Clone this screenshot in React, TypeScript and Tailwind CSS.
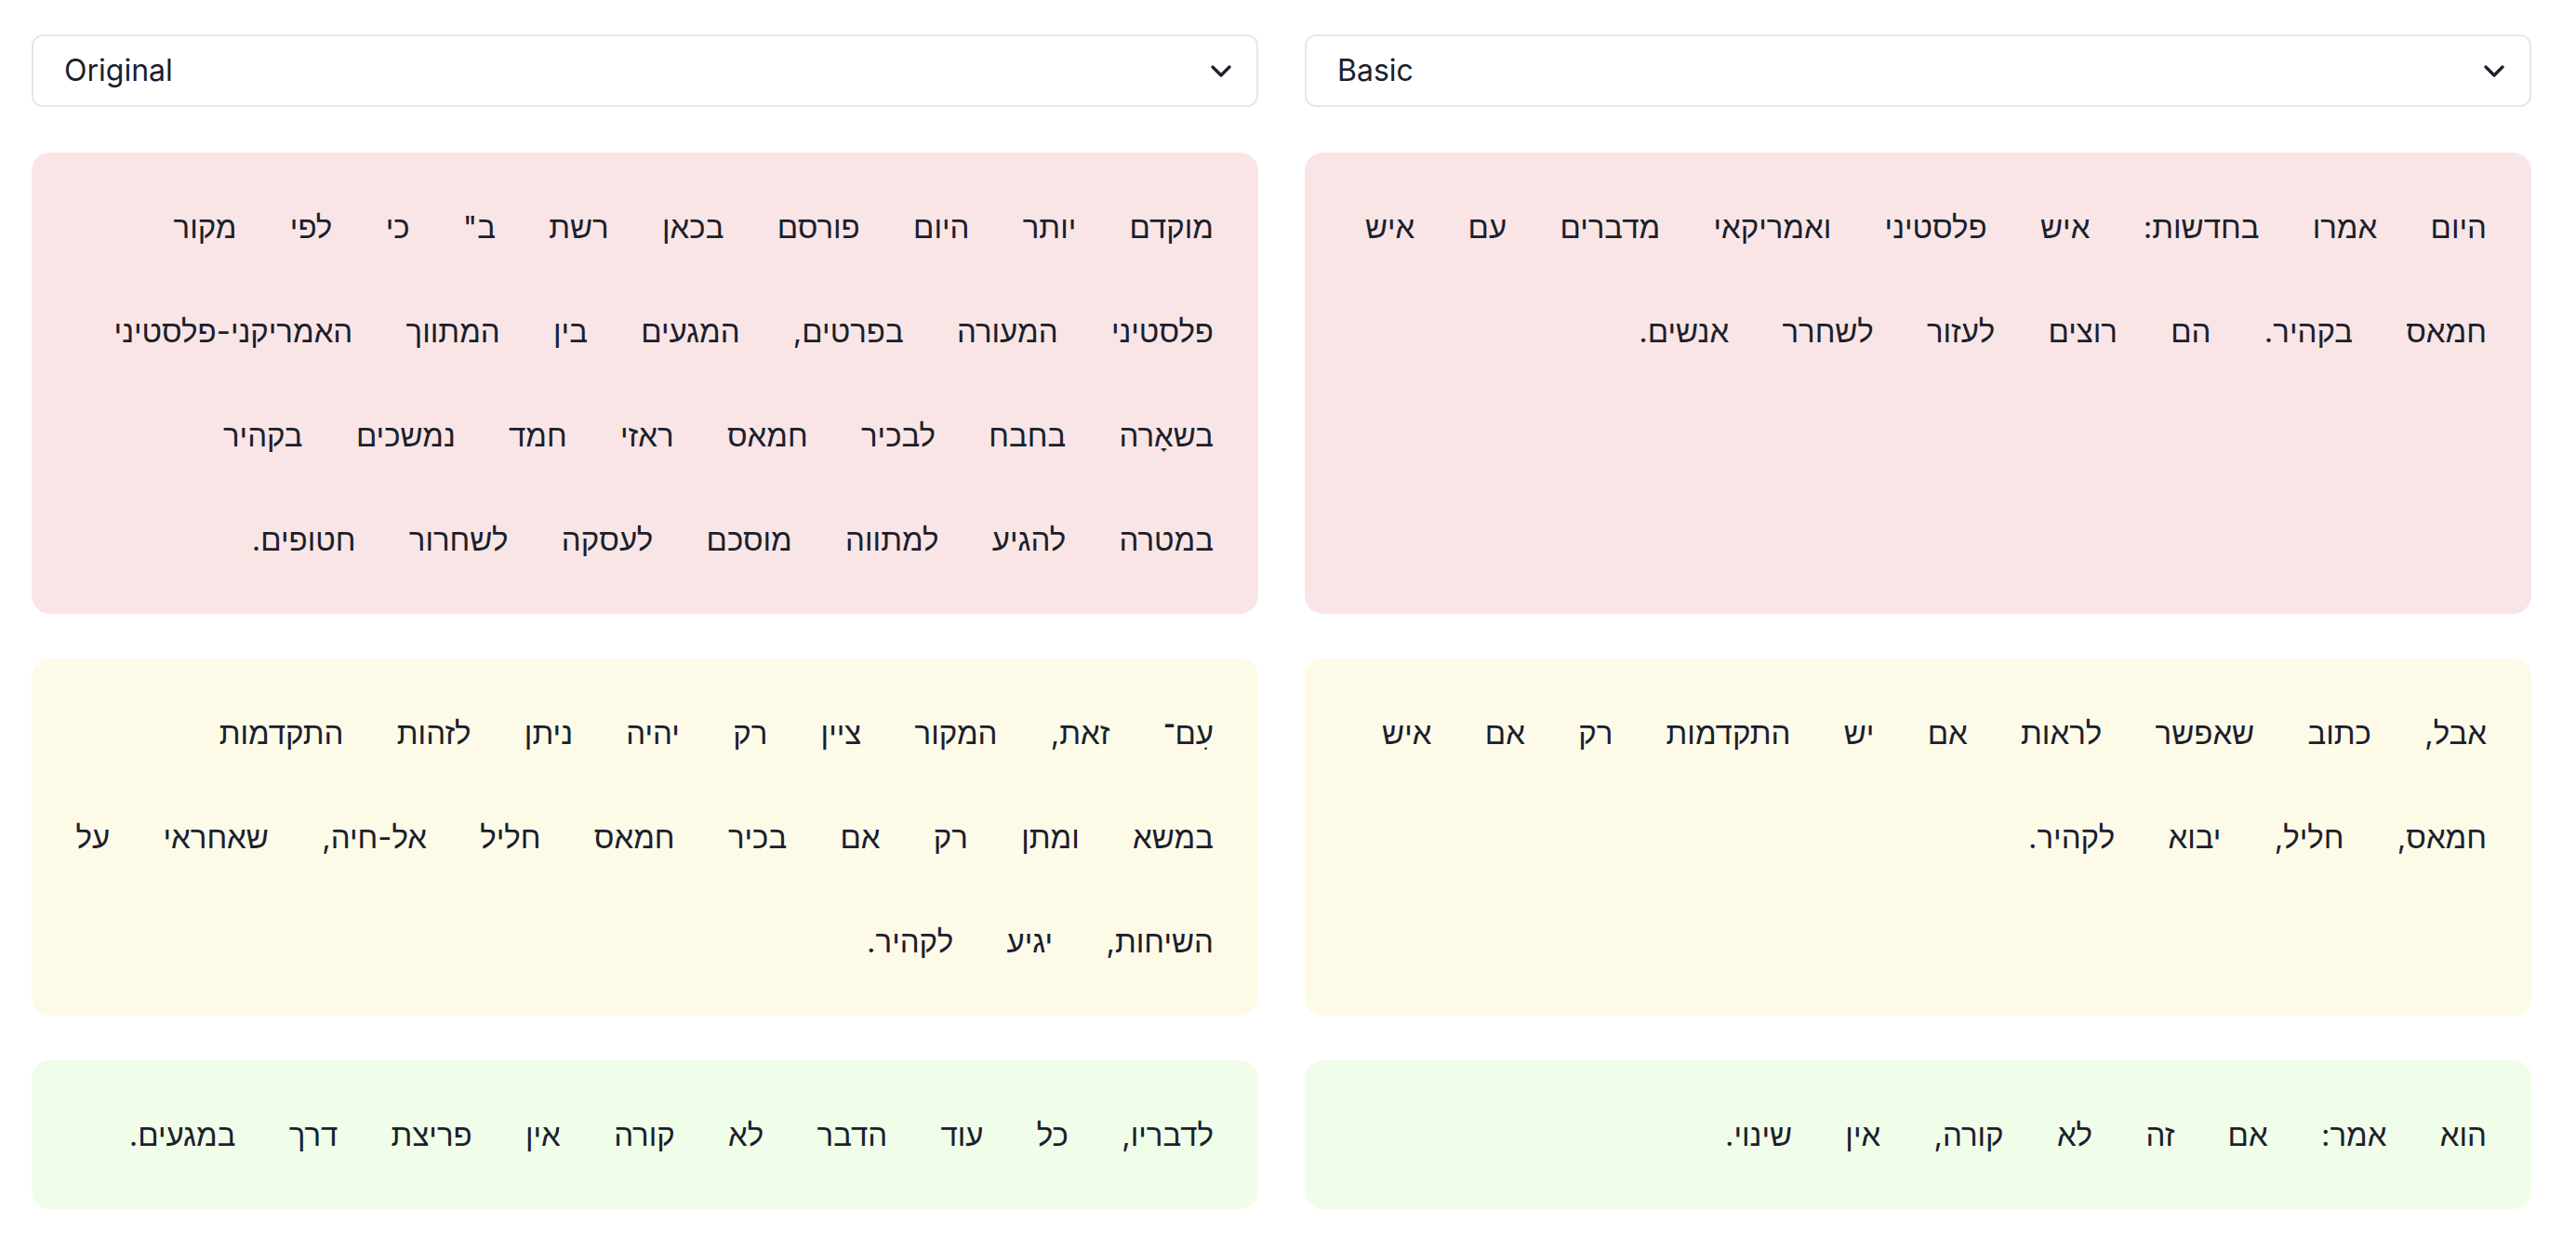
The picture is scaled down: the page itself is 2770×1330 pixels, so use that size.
import React from "react";

type Panel = { bg: string; lines: string[][] };

const w = (s: string) => s.split(" ");

const rows: { left: Panel; right: Panel }[] = [
  {
    left: {
      bg: "bg-[#f9e5e5]",
      lines: [
        ["מוקדם", "יותר", "היום", "פורסם", "בכאן", "רשת", 'ב"', "כי", "לפי", "מקור"],
        w("פלסטיני המעורה בפרטים, המגעים בין המתווך האמריקני-פלסטיני"),
        w("בשאָרה בחבח לבכיר חמאס ראזי חמד נמשכים בקהיר"),
        w("במטרה להגיע למתווה מוסכם לעסקה לשחרור חטופים."),
      ],
    },
    right: {
      bg: "bg-[#f9e5e5]",
      lines: [
        w("היום אמרו בחדשות: איש פלסטיני ואמריקאי מדברים עם איש"),
        w("חמאס בקהיר. הם רוצים לעזור לשחרר אנשים."),
      ],
    },
  },
  {
    left: {
      bg: "bg-[#fdfae8]",
      lines: [
        w("עִם־ זאת, המקור ציין רק יהיה ניתן לזהות התקדמות"),
        w("במשא ומתן רק אם בכיר חמאס חליל אל-חיה, שאחראי על"),
        w("השיחות, יגיע לקהיר."),
      ],
    },
    right: {
      bg: "bg-[#fdfae8]",
      lines: [
        w("אבל, כתוב שאפשר לראות אם יש התקדמות רק אם איש"),
        w("חמאס, חליל, יבוא לקהיר."),
      ],
    },
  },
  {
    left: {
      bg: "bg-[#f0fde8]",
      lines: [w("לדבריו, כל עוד הדבר לא קורה אין פריצת דרך במגעים.")],
    },
    right: {
      bg: "bg-[#f0fde8]",
      lines: [w("הוא אמר: אם זה לא קורה, אין שינוי.")],
    },
  },
];

function Select({ label }: { label: string }) {
  return (
    <div className="flex h-[78px] items-center justify-between rounded-xl border-2 border-[#e2e8f0] bg-white pl-[33px] pr-[27px] text-[32px] text-[#1a202c]">
      <span>{label}</span>
      <svg width="22" height="13" viewBox="0 0 22 13" fill="none">
        <path d="M2 2 L11 11 L20 2" stroke="#1a202c" strokeWidth="3.2" strokeLinecap="round" strokeLinejoin="round" />
      </svg>
    </div>
  );
}

function TextPanel({ panel }: { panel: Panel }) {
  return (
    <div dir="rtl" className={`${panel.bg} rounded-[20px] p-6 text-right text-[33px] leading-[112px] text-[#1a202c]`}>
      {panel.lines.map((line, i) => (
        <div key={i} className="whitespace-nowrap">
          {line.map((word, j) => (
            <React.Fragment key={j}>
              <span className="px-6">{word}</span>
              {j < line.length - 1 ? " " : null}
            </React.Fragment>
          ))}
        </div>
      ))}
    </div>
  );
}

export default function App() {
  return (
    <div className="min-h-screen bg-white pb-[30px] pl-[34px] pt-[37px] font-[family-name:Inter,'Liberation_Sans',sans-serif]">
      <div className="grid w-[2688px] grid-cols-2 gap-x-[50px] gap-y-12">
        <div className="mb-px">
          <Select label="Original" />
        </div>
        <div className="mb-px">
          <Select label="Basic" />
        </div>
        {rows.map((r, i) => (
          <React.Fragment key={i}>
            <TextPanel panel={r.left} />
            <TextPanel panel={r.right} />
          </React.Fragment>
        ))}
      </div>
    </div>
  );
}
